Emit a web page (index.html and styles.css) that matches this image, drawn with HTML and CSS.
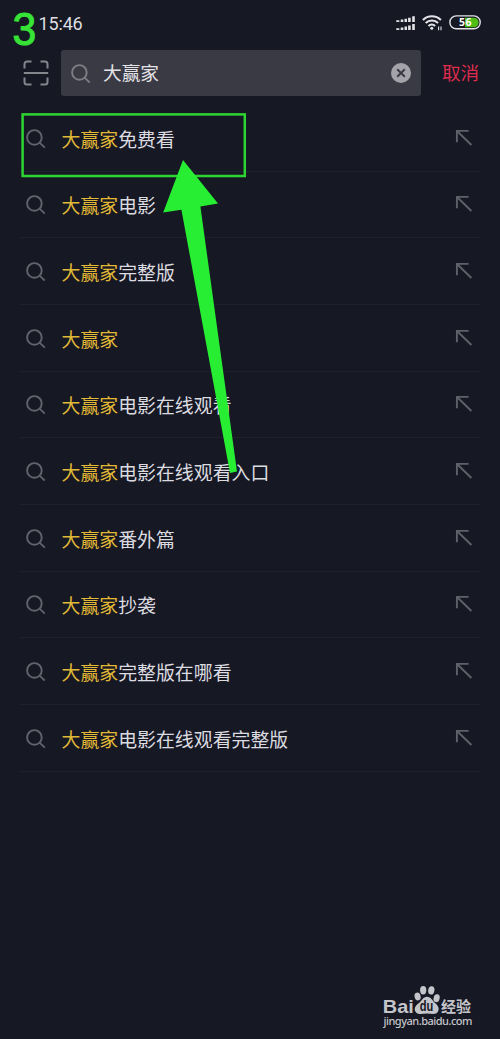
FILE: index.html
```html
<!DOCTYPE html>
<html lang="zh-CN">
<head>
<meta charset="utf-8">
<title>大赢家</title>
<link rel="stylesheet" href="styles.css">
</head>
<body>
<svg class="defs" width="0" height="0">
  <symbol id="search" viewBox="0 0 20 20"><circle cx="8.4" cy="8.4" r="7.3"/><path d="M13.6 13.6l5.2 5"/></symbol>
  <symbol id="fill" viewBox="0 0 18 18"><path d="M1.9 13.2V1.9H13.6M2.3 2.3L16.4 16"/></symbol>
</svg>
<main class="screen">
  <header class="status">
    <span class="time">15:46</span>
    <svg class="status-icons" viewBox="0 0 90 20" width="90" height="20">
      <g fill="#e4e4e8">
        <path d="M1.3 10.3h3v1.8h-3zM5.7 9.500h2.600v2.600H5.700zM9.500 8.700h2.500v3.400H9.500zM13.100 7.700h2.600v4.400h-2.600zM17.200 6.300h2.600v5.800h-2.600z"/>
        <path d="M1.3 18.300h3v1.800h-3zM5.700 17.400h2.600V20H5.700zM9.500 16.600h2.500V20H9.500zM13.100 15.500h2.600V20h-2.600zM17.200 14h2.600v6h-2.600z"/>
      </g>
      <g fill="none" stroke="#e4e4e8" stroke-width="2.1">
        <path d="M27.900 9.900a12.800 12.800 0 0 1 18 0M30.700 13a8.800 8.800 0 0 1 12.400 0M33.500 15.900a4.800 4.800 0 0 1 6.600 0"/>
        <path d="M43.600 16.500v3.700M46 16.500v3.700" stroke-width="1.100"/>
      </g>
      <circle cx="36.800" cy="18.200" r="1.500" fill="#e4e4e8"/>
      <path d="M70 7.700h8.800a4.800 4.800 0 0 1 0 9.600H70z" fill="#50bd16"/>
      <rect x="54.900" y="5.900" width="30.300" height="12.900" rx="6.400" fill="none" stroke="#e4e4e8" stroke-width="1.400"/>
      <text class="battery" x="64" y="16.200" textLength="12.500">56</text>
    </svg>
  </header>
  <div class="search-bar">
    <svg class="scan" viewBox="0 0 26 26" width="26" height="26"><path d="M1.500 8.500V4a2.500 2.500 0 0 1 2.500-2.500h4.500M17.500 1.500H22A2.500 2.500 0 0 1 24.500 4v4.500M24.500 17.500V22a2.500 2.500 0 0 1-2.500 2.500h-4.500M8.500 24.500H4A2.500 2.500 0 0 1 1.500 22v-4.500M.8 13h24.400"/></svg>
    <div class="field">
      <svg class="glass"><use href="#search"/></svg>
      <span class="query">大赢家</span>
      <svg class="clear" viewBox="0 0 20 20" width="20" height="20"><circle cx="10" cy="10" r="10"/><path d="M6.200 6.200l7.600 7.600M13.800 6.200l-7.600 7.600"/></svg>
    </div>
    <span class="cancel">取消</span>
  </div>
  <ul class="list">
    <li class="row"><svg class="glass"><use href="#search"/></svg><span class="label"><b class="hit">大赢家</b>免费看</span><svg class="arrow"><use href="#fill"/></svg></li>
    <li class="row"><svg class="glass"><use href="#search"/></svg><span class="label"><b class="hit">大赢家</b>电影</span><svg class="arrow"><use href="#fill"/></svg></li>
    <li class="row"><svg class="glass"><use href="#search"/></svg><span class="label"><b class="hit">大赢家</b>完整版</span><svg class="arrow"><use href="#fill"/></svg></li>
    <li class="row"><svg class="glass"><use href="#search"/></svg><span class="label"><b class="hit">大赢家</b></span><svg class="arrow"><use href="#fill"/></svg></li>
    <li class="row"><svg class="glass"><use href="#search"/></svg><span class="label"><b class="hit">大赢家</b>电影在线观看</span><svg class="arrow"><use href="#fill"/></svg></li>
    <li class="row"><svg class="glass"><use href="#search"/></svg><span class="label"><b class="hit">大赢家</b>电影在线观看入口</span><svg class="arrow"><use href="#fill"/></svg></li>
    <li class="row"><svg class="glass"><use href="#search"/></svg><span class="label"><b class="hit">大赢家</b>番外篇</span><svg class="arrow"><use href="#fill"/></svg></li>
    <li class="row"><svg class="glass"><use href="#search"/></svg><span class="label"><b class="hit">大赢家</b>抄袭</span><svg class="arrow"><use href="#fill"/></svg></li>
    <li class="row"><svg class="glass"><use href="#search"/></svg><span class="label"><b class="hit">大赢家</b>完整版在哪看</span><svg class="arrow"><use href="#fill"/></svg></li>
    <li class="row"><svg class="glass"><use href="#search"/></svg><span class="label"><b class="hit">大赢家</b>电影在线观看完整版</span><svg class="arrow"><use href="#fill"/></svg></li>
  </ul>
  <svg class="notes" viewBox="0 0 500 1039" width="500" height="1039">
    <rect x="22.600" y="114.400" width="222.200" height="61.600" fill="none" stroke="#2cd532" stroke-width="2.500"/>
    <path d="M183 160l35 43.500-17.600 3L237 471.500l-7 1.500-48.600-263.300-18.200 2.800z" fill="#27ee32"/>
    <text class="step" x="12.600" y="45" textLength="23.800" lengthAdjust="spacingAndGlyphs">3</text>
    <g class="mark">
      <text class="brand" x="382.800" y="1012.700" textLength="31" lengthAdjust="spacingAndGlyphs">Bai</text>
      <ellipse cx="417.600" cy="996.500" rx="3" ry="4" transform="rotate(-15 417.600 996.500)"/>
      <ellipse cx="423.200" cy="990.200" rx="3.100" ry="4.200"/>
      <ellipse cx="431.300" cy="990.400" rx="3.100" ry="4.200" transform="rotate(10 431.300 990.400)"/>
      <ellipse cx="436.600" cy="998.200" rx="3" ry="4" transform="rotate(15 436.600 998.200)"/>
      <path d="M427 996.800c4 0 5.300 3.800 8 6.200 3.300 2.800 4.600 5.500 3 8.500-2 3.800-6.500 2-11 2s-9 1.800-11.300-1.500c-2.200-3.300-.4-6.200 3.300-9 3-2.300 4-6.200 8-6.200z"/>
      <text class="du" x="419.800" y="1011" textLength="13.500" lengthAdjust="spacingAndGlyphs">du</text>
      <text class="jy" x="441" y="1012" textLength="30">经验</text>
      <text class="url" x="383.500" y="1024.700" textLength="89">jingyan.baidu.com</text>
    </g>
  </svg>
</main>
</body>
</html>
```
FILE: styles.css
```css
* { box-sizing: border-box; }
body { margin: 0; background: #161823; }
.defs { position: absolute; }
.screen {
  position: relative;
  width: 500px;
  height: 1039px;
  overflow: hidden;
  background: #161823;
  color: #dcdce0;
  font-family: "Noto Sans CJK SC", sans-serif;
}
.status {
  display: flex;
  justify-content: space-between;
  align-items: flex-start;
  height: 50px;
  padding: 10px 15px 0 38.5px;
}
.time { font: 18px/27px Roboto, sans-serif; letter-spacing: -0.15px; color: #dedee2; }
.status-icons { overflow: visible; }
.battery { font: bold 10.5px "Noto Sans", sans-serif; fill: #fff; }
.search-bar { display: flex; align-items: center; height: 46px; padding: 0 20px 0 23px; }
.scan { margin-top: -1px; fill: none; stroke: #85858e; stroke-width: 2; }
.field {
  display: flex;
  align-items: center;
  width: 360px;
  height: 46px;
  margin-left: 12px;
  padding: 0 10px;
  border-radius: 3px;
  background: #3a3a44;
}
.glass { width: 20px; height: 20px; margin-top: 1px; fill: none; stroke: #62636c; stroke-width: 1.9; }
.field .glass { margin-top: 2px; stroke: #7d7d85; }
.query { flex: 1; margin-left: 12px; padding-bottom: 2px; font-size: 18.7px; line-height: 44px; color: #e4e4e8; }
.clear { margin-top: -1px; }
.clear circle { fill: #a3a3a9; }
.clear path { fill: none; stroke: #3a3a44; stroke-width: 2; }
.cancel { margin-left: 21px; padding-bottom: 2px; font-size: 18.6px; line-height: 44px; color: #dc2b4e; white-space: nowrap; }
.list { margin: 0; padding: 9px 20px 0; list-style: none; }
.row {
  display: flex;
  align-items: center;
  height: 66.67px;
  padding: 0 6px;
  border-bottom: 1px solid #1e202b;
}
.row .glass { margin-top: 2px; }
.label { flex: 1; margin-left: 15.5px; padding-top: 2px; font-size: 18.9px; line-height: 28px; white-space: nowrap; }
.hit { font-weight: 400; color: #e2b936; }
.arrow { width: 18px; height: 18px; margin-right: 1px; fill: none; stroke: #5f6069; stroke-width: 1.9; }
.notes { position: absolute; inset: 0; }
.step { font: 46px "Liberation Sans", sans-serif; fill: #36e336; stroke: #36e336; stroke-width: 1; }
.mark { fill: #c4c5ca; }
.brand { font: bold 19px "Liberation Sans", sans-serif; }
.du { font: bold 14px "Liberation Sans", sans-serif; fill: #161823; }
.jy { font: bold 15px "Noto Sans CJK SC", sans-serif; }
.url { font: 500 11px "Noto Sans", sans-serif; }
```
